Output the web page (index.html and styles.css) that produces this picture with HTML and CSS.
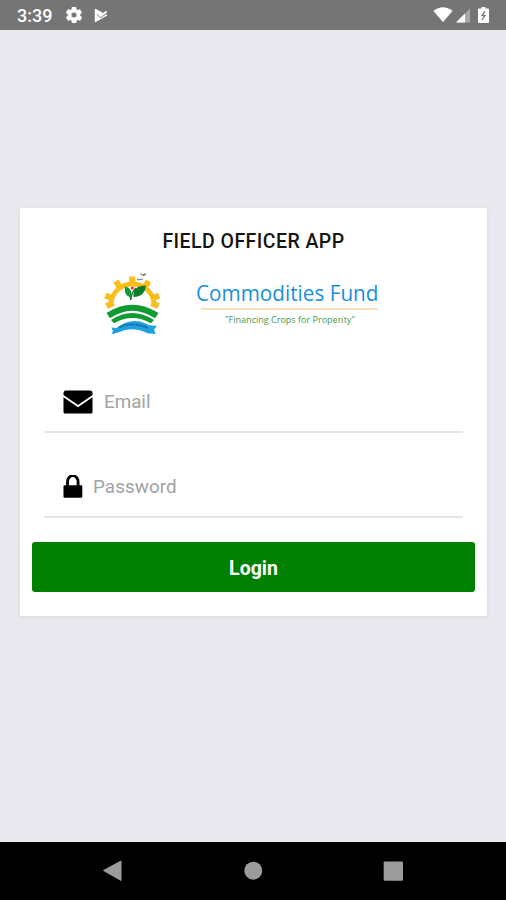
FILE: index.html
```html
<!DOCTYPE html>
<html lang="en">
<head>
<meta charset="utf-8">
<title>Field Officer App</title>
<link rel="stylesheet" href="styles.css">
</head>
<body>
<header class="status">
  <span class="time">3:39</span>
  <svg class="gear" width="16" height="16" viewBox="2 2 20 20"><path fill="#fff" stroke="#fff" stroke-width=".6" d="M19.4 13c0-.3.1-.6.1-1s0-.7-.1-1l2.100-1.600c.2-.2.2-.4.100-.6l-2-3.500c-.1-.2-.4-.3-.6-.2l-2.500 1a7 7 0 0 0-1.700-1L14.500 2.400c0-.2-.3-.4-.5-.4h-4c-.2 0-.5.2-.5.4l-.4 2.700a7 7 0 0 0-1.700 1l-2.500-1c-.2-.1-.5 0-.6.2l-2 3.500c-.1.2-.1.500.1.600L4.600 11a8 8 0 0 0 0 2l-2.100 1.600c-.2.2-.2.400-.1.600l2 3.500c.1.2.4.3.6.2l2.500-1a7 7 0 0 0 1.700 1l.4 2.700c0 .2.200.4.5.4h4c.2 0 .5-.2.500-.4l.4-2.700a7 7 0 0 0 1.700-1l2.500 1c.2.1.5 0 .6-.2l2-3.500c.1-.2.1-.5-.1-.6zM12 15.500a3.500 3.500 0 1 1 0-7 3.500 3.500 0 0 1 0 7z"/></svg>
  <svg class="play" width="14" height="15" viewBox="0 0 14 15"><path fill="#fff" d="M.8.500 9 4.800 6.500 7.500 4 5 2.800 6.200l3.700 3.700 5.500-4.200 1.300 1.800L.8 14.500z"/><path d="m3.500 5 3 3.300L12.600 3.500" fill="none" stroke="#fff" stroke-width="1.800"/><path d="m3 6.500 3.500 3.500 5.500-4.200" fill="none" stroke="#757575" stroke-width=".5"/></svg>
  <span class="spacer"></span>
  <svg width="57" height="18" viewBox="433 6 57 18"><path fill="#fff" d="M433.500 11Q443 3.500 452.500 11L443 22z"/><path fill="#a9a9a9" d="M470 8.500v14h-14z"/><path fill="#fff" d="M465 13.500v9h-9z"/><path fill="#fff" d="M479 8.500h2.500V7h4v1.500h2.500q1 0 1 1v12.500q0 1-1 1h-9q-1 0-1-1V9.500q0-1 1-1z"/><path d="m485 11-3 4.500h3L482 20" fill="none" stroke="#757575" stroke-width="1.300"/></svg>
</header>
<main class="screen">
  <section class="card">
    <h1 class="title">FIELD OFFICER APP</h1>
    <svg class="logo" width="300" height="75" viewBox="95 265 300 75">
      <g fill="none" stroke="#fbbd18">
        <path d="M111 305a21.500 21 0 0 1 43 0" stroke-width="4.800"/>
        <path d="M106.500 306l7-3M151.500 303l7 3M105.500 295.500l7 3M159 295.500l-7 3M116 281l4 7M148.500 281l-4 7M132.200 276.500v7" stroke-width="6"/>
      </g>
      <path d="M131 300c0-5 1-8 5-12M131 300c0-5-2-6-4-8" fill="none" stroke="#176b25" stroke-width="1.300"/>
      <path fill="#159638" d="M125 286.500c5 1 7 4 6.500 11-5-1-7.500-4-6.500-11z"/>
      <path fill="#0c7b2c" d="M146 285.500c-1 7-4 11-12.500 11.500-1-8 4-11.500 12.500-11.500z"/>
      <circle cx="132.300" cy="288" r="1.500" fill="#df2c22"/>
      <path d="m137 279 2 1 2-1 2 1M140 273.500l2.500 1.500 3-1.500M143 275.500l3-1" fill="none" stroke="#454545" stroke-width=".8"/>
      <path fill="#109b32" d="M106.500 313Q132 296.500 158.500 313l-3.500 5.300Q132 303 110 318.300z"/>
      <path fill="#109b32" d="M111 320Q132 306 154 320l-3 3.300Q132 312.500 114 323.300z"/>
      <path fill="#20a0df" d="M111.500 327.500l5 .5Q132 315.500 148.500 325l8.500 1-3 3.500 1.500 4.500-8-.8Q132 325.500 118 332.500l-6 1.800.8-3.500z"/>
      <path d="M119 327.500Q132 321 147.500 328" fill="none" stroke="#176aa0" stroke-width="2" stroke-dasharray="1.800 .7"/>
      <text class="brand" x="196" y="301" textLength="182.500" lengthAdjust="spacingAndGlyphs">Commodities Fund</text>
      <path d="M201 309h177" stroke="#fbd3a3" stroke-width="1.300"/>
      <text class="tagline" x="225" y="323" textLength="130" lengthAdjust="spacingAndGlyphs">"Financing Crops for Properity"</text>
    </svg>
    <div class="field">
      <svg width="30" height="24" viewBox="0 0 30 24"><path d="M3 .5h24q2.500 0 2.500 2.500v2L15 15 .5 5V3Q.5.500 3 .5z"/><path d="M.5 7.300 15 17.300 29.500 7.300V22q0 1.500-1.500 1.500H2Q.5 23.500.5 22z"/></svg>
      <span class="hint email">Email</span>
    </div>
    <div class="field password">
      <svg width="20" height="24" viewBox="0 .8 20 24"><path d="M4.500 12V7.500a5.300 6 0 0 1 10.600 0V12" fill="none" stroke="#000" stroke-width="2.800"/><rect x=".5" y="11" width="18.800" height="12.500" rx="1.300"/></svg>
      <span class="hint secret">Password</span>
    </div>
    <button class="login">Login</button>
  </section>
</main>
<nav class="nav">
  <svg width="506" height="58" viewBox="0 842 506 58" fill="#9c9c9c"><path d="M103.500 870.500 121 861v19.500z" stroke="#9c9c9c" stroke-linejoin="round"/><circle cx="253.300" cy="870.700" r="9"/><rect x="383.700" y="861.500" width="19.300" height="19.300" rx="1"/></svg>
</nav>
</body>
</html>
```

FILE: styles.css
```css
* { box-sizing: border-box; }
body {
  margin: 0;
  height: 900px;
  display: flex;
  flex-direction: column;
  overflow: hidden;
  background: #e8e8ee;
  font-family: Roboto, sans-serif;
}
.status {
  height: 30px;
  display: flex;
  align-items: center;
  padding: 0 16px 0 17px;
  background: #757575;
  color: #fff;
}
.time { width: 49px; font-size: 18px; font-weight: 500; line-height: 30px; padding-top: 2px; }
.gear { margin-right: 12px; }
.play { margin-top: 1px; }
.spacer { flex: 1; }
.screen { flex: 1; padding: 178px 19px 0 20px; }
.card {
  height: 408px;
  padding: 22px 12px 0;
  background: #fff;
  box-shadow: 0 1px 3px #c9c9d080;
  display: flex;
  flex-direction: column;
}
.title {
  margin: 0 0 11px;
  font-size: 19.500px;
  font-weight: 500;
  line-height: 24px;
  color: #151515;
  text-align: center;
  letter-spacing: .45px;
}
.logo { flex: none; margin-left: 63px; }
.brand { font: 22px "Open Sans", sans-serif; fill: #198fd9; }
.tagline { font: 9px "Open Sans", sans-serif; fill: #3f9a4c; }
.field {
  height: 62px;
  margin: 31px 12px 0;
  padding: 2px 0 0 19px;
  border-bottom: 2px solid #e5e5e5;
  display: flex;
  align-items: center;
}
.password { margin-top: 23px; }
.hint { color: #a2a2a2; font-size: 18.800px; line-height: 24px; padding-bottom: 1px; }
.email { margin-left: 11px; }
.secret { margin-left: 10px; letter-spacing: .1px; }
.login {
  flex: none;
  height: 50px;
  margin: 24px 0 0;
  padding: 3px 0 0;
  border: 0;
  border-radius: 3px;
  background: #008000;
  color: #fff;
  font: 700 19.500px Roboto, sans-serif;
}
.nav { height: 58px; background: #000; }
.nav svg { display: block; }
```
